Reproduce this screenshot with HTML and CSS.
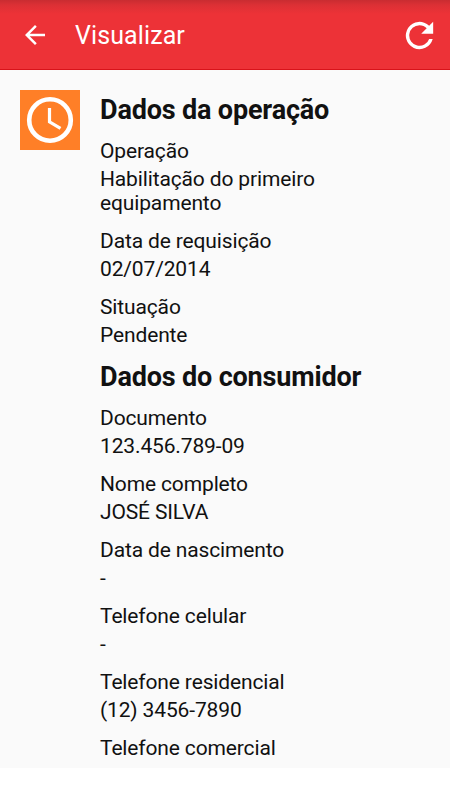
FILE: index.html
```html
<!DOCTYPE html>
<html lang="pt-BR">
<head>
<meta charset="utf-8">
<title>Visualizar</title>
<link rel="stylesheet" href="styles.css">
</head>
<body>
<div class="screen">
  <header class="bar">
    <svg class="back" viewBox="0 0 24 24"><path d="M20 11H7.8l5.6-5.6L12 4l-8 8 8 8 1.4-1.4L7.8 13H20z"/></svg>
    <h1 class="bar-title">Visualizar</h1>
    <svg class="refresh" viewBox="0 0 24 24"><path d="M17.65 6.35A8 8 0 1 0 19.73 14h-2.08A6 6 0 1 1 12 6c1.66 0 3.14.69 4.22 1.78L13 11h7V4z"/></svg>
  </header>
  <main class="content">
    <div class="status"><svg class="clock" viewBox="0 0 60 60"><circle cx="30" cy="30" r="20.8"/><path class="hands" d="M29.5 18v13.8l11 6.5"/></svg></div>
    <div class="details">
      <section>
        <h2>Dados da operação</h2>
        <dl>
          <dt>Operação</dt><dd>Habilitação do primeiro<br>equipamento</dd>
          <dt>Data de requisição</dt><dd>02/07/2014</dd>
          <dt>Situação</dt><dd>Pendente</dd>
        </dl>
      </section>
      <section>
        <h2>Dados do consumidor</h2>
        <dl>
          <dt>Documento</dt><dd>123.456.789-09</dd>
          <dt>Nome completo</dt><dd>JOSÉ SILVA</dd>
          <dt>Data de nascimento</dt><dd>-</dd>
          <dt>Telefone celular</dt><dd>-</dd>
          <dt>Telefone residencial</dt><dd>(12) 3456-7890</dd>
          <dt>Telefone comercial</dt>
        </dl>
      </section>
    </div>
  </main>
</div>
</body>
</html>
```
FILE: styles.css
```css
body { margin: 0; background: #fff; font-family: Roboto, sans-serif; color: #111; }
.screen { height: 768px; background: #fafafa; overflow: hidden; }
.bar { box-sizing: border-box; height: 70px; padding: 1px 16px 0 20px; display: flex; align-items: center; background: linear-gradient(#c92c31, #dc3035 5px, #ed3237 14px); border-bottom: 1px solid #d8131a; color: #fff; }
.back { width: 30px; height: 30px; fill: #fff; }
.bar-title { flex: 1; margin: 2px 0 0 25px; font-size: 25px; line-height: 30px; font-weight: 400; letter-spacing: 0.1px; }
.refresh { width: 41px; height: 41px; margin-right: -6px; fill: #fff; }
.content { display: flex; gap: 20px; padding: 20px; }
.status { width: 60px; height: 60px; background: #ff7f27; }
.clock { display: block; fill: none; stroke: #fff; stroke-width: 4.6; }
.hands { stroke-width: 3.2; }
.details { flex: 1; }
h2 { margin: 0; padding-top: 1px; font-size: 27px; line-height: 39px; font-weight: 700; letter-spacing: -0.17px; }
dl { margin: 0; padding: 9px 0 10px; }
dt, dd { margin: 0; font-size: 21px; line-height: 24px; font-weight: 400; letter-spacing: -0.14px; }
dt { margin-bottom: 4px; }
dd { margin-bottom: 14px; }
dd:last-child { margin-bottom: 0; }
```
